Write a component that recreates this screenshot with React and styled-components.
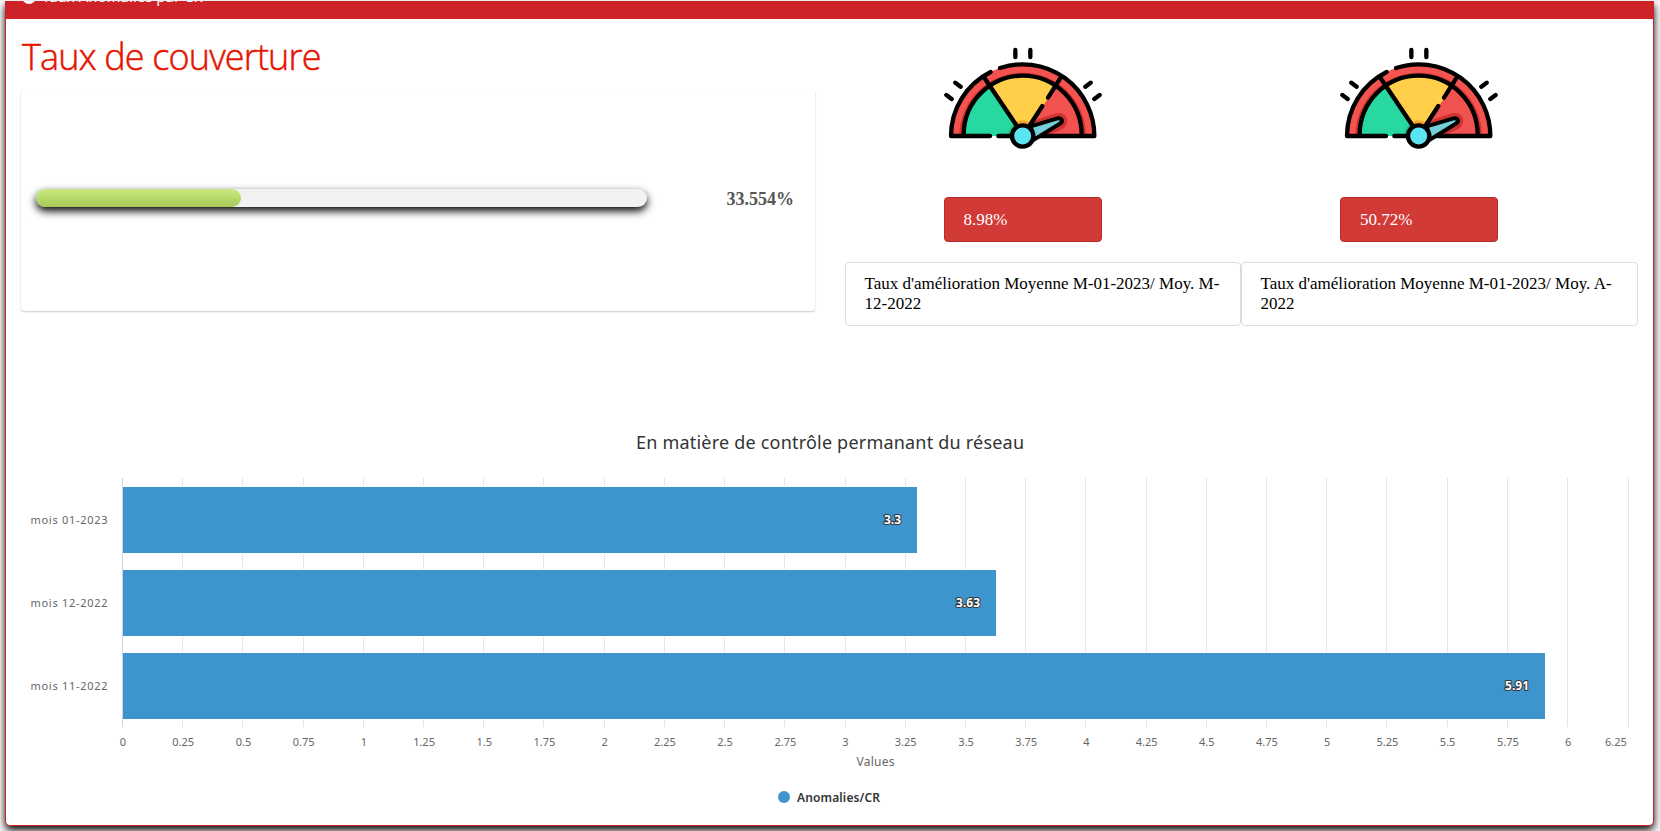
import React from "react";
import styled, { createGlobalStyle } from "styled-components";

const Global = createGlobalStyle`
  *{box-sizing:border-box}
  html,body,#root{margin:0;height:831px;overflow:hidden;background:#fff}
`;
const CHART_FONT = '"Noto Sans","Open Sans",sans-serif';

const Page = styled.div`
  height: 831px;
  overflow: hidden;
  border-top: 1px solid #ececec;
  padding: 0 6px 5px 5px;
  display: flex;
  font-family: "Liberation Serif", serif;
`;
const Panel = styled.section`
  flex: 1;
  height: 825px;
  display: flex;
  flex-direction: column;
  background: #fff;
  border: 1px solid #ce2229;
  border-top: 0;
  border-radius: 0 0 5px 5px;
  box-shadow: 0 4px 8px #000;
`;
const PanelHeader = styled.header`
  height: 18px;
  flex: none;
  overflow: hidden;
  display: flex;
  align-items: flex-start;
  gap: 6px;
  padding-left: 16px;
  background: #ce2229;
  color: #fff;
`;
const HeaderDot = styled.svg`
  width: 14px;
  height: 14px;
  flex: none;
  margin-top: -11px;
`;
const HeaderTitle = styled.span`
  margin-top: -16px;
  font: 15px/22px "Noto Sans", sans-serif;
  white-space: nowrap;
`;
const Top = styled.div`
  display: flex;
  height: 390px;
  flex: none;
  padding: 0 15px;
  gap: 30px;
`;
const Coverage = styled.div`
  width: 794px;
`;
const Title = styled.h1`
  margin: 14px 0 0 1px;
  height: 56px;
  font: 300 36px/48px "Open Sans", sans-serif;
  letter-spacing: -0.85px;
  -webkit-text-stroke: 0.5px #e61400;
  color: #e61400;
  white-space: nowrap;
`;
const ProgressCard = styled.div`
  height: 222px;
  border-radius: 3px;
  box-shadow: 0 1px 2px rgba(0, 0, 0, 0.2), 0 0 1px rgba(0, 0, 0, 0.1);
  padding: 100px 21px 0 15px;
  display: flex;
  align-items: flex-start;
  justify-content: space-between;
`;
const Track = styled.div`
  width: 611px;
  height: 18px;
  border-radius: 9px;
  background: #f2f2f2;
  box-shadow: 0 4px 8px #000;
`;
const Fill = styled.div`
  height: 100%;
  border-radius: 9px;
  background: linear-gradient(#cbea82, #a5c956);
`;
const Percent = styled.strong`
  font-size: 18px;
  line-height: 21px;
  color: #555;
`;
const Indicators = styled.div`
  display: flex;
  width: 793px;
`;
const Indicator = styled.article`
  width: 396px;
  display: flex;
  flex-direction: column;
  align-items: center;
  padding-top: 9px;

  &:last-child {
    width: 397px;
  }
`;
const Gauge = styled.svg`
  width: 158px;
  height: 158px;
  flex: none;
  margin-left: -41px;
`;
const Rate = styled.div`
  width: 158px;
  height: 45px;
  margin: 11px 0 20px -41px;
  padding: 0 19px;
  border: 1px solid #b52b2b;
  border-radius: 4px;
  background: #d23a37;
  color: #fff;
  font-size: 17px;
  line-height: 43px;
`;
const Caption = styled.div`
  width: 100%;
  height: 64px;
  padding: 11px 18.5px;
  border: 1px solid #ddd;
  border-radius: 4px;
  color: #000;
  font-size: 17px;
  line-height: 20px;
`;
const Chart = styled.svg`
  width: 1647px;
  height: 416px;
  flex: none;
  display: block;
  font-family: ${CHART_FONT};
`;
const AxisText = styled.text`
  font-size: ${(p) => p.$size || 11}px;
  fill: #666;
`;
const ChartTitle = styled.text`
  font-size: 18px;
  fill: #333;
`;
const ValueText = styled.text`
  font-size: 12px;
  font-weight: 700;
  fill: #fff;
  stroke: #333;
  stroke-width: 2px;
  stroke-linejoin: round;
  paint-order: stroke;
`;
const LegendText = styled.text`
  font-size: 12px;
  font-weight: 600;
  fill: #333;
`;

function GaugeIcon() {
  return (
    <Gauge viewBox="0 0 158 158" aria-hidden="true">
      <g transform="translate(-14 7) scale(0.33333)" strokeLinecap="round" strokeLinejoin="round">
        <path d="M63 303a215 215 0 0 1 430 0z" fill="#f55350" />
        <path d="M88 303a190 190 0 0 1 380 0z" fill="#d13330" />
        <path d="M101 303a177 178 0 0 1 354 0z" fill="#f2524f" />
        <path d="M101 303C101 243 131 189 178 157L278 303z" fill="#27d9a1" />
        <path d="M178 157C236 114 318 114 377 157L278 303z" fill="#ffcf4a" />
        <path d="M258 262c10-7 30-7 40 0l-20 30z" fill="#f5a52c" />
        <path d="M236 303c-2-14 3-24 14-34l20 34z" fill="#1fb98a" />
        <path d="M296 262L374 236c26-8 44 10 36 30-3 9-10 15-20 20l-50 21z" fill="#d13330" />
        <g fill="none" stroke="#000" strokeWidth="13">
          <path d="M180 303H63A215 215 0 0 1 182 111" />
          <path d="M210 99A215 215 0 0 1 493 303H318" />
          <path d="M205 303h42" />
          <path d="M101 300A177 178 0 0 1 455 300" />
          <path d="M163 128L260 272" />
          <path d="M392 128L354 188M337 213L300 270" />
          <path d="M256 45v21M301 45v21" />
          <path d="M76 143l16 12M49 180l16 12M482 143l-16 12M509 180l-16 12" />
        </g>
        <path d="M302 274L380 251c16-4 22 8 8 16L312 314z" fill="#75cfdb" stroke="#000" strokeWidth="12" />
        <circle cx="278" cy="303" r="32" fill="#5be4f1" stroke="#000" strokeWidth="13" />
      </g>
    </Gauge>
  );
}

const bars = [
  { label: "mois 01-2023", value: 3.3 },
  { label: "mois 12-2022", value: 3.63 },
  { label: "mois 11-2022", value: 5.91 },
];
const ticks = Array.from({ length: 26 }, (_, i) => i * 0.25);
const X0 = 117;
const UNIT = 240.84;
const PLOT_RIGHT = 1622.5;
const barWidth = (value) => Math.round(value * UNIT - 1);
const gridX = (t) => (t === 6.25 ? PLOT_RIGHT : Math.round(X0 + t * UNIT) - 0.5);

function BarChart() {
  return (
    <Chart viewBox="0 0 1647 416">
      <ChartTitle x="824" y="40" textAnchor="middle" textLength="388">En matière de contrôle permanant du réseau</ChartTitle>
      {ticks.map((t) => (
        <path key={t} d={`M${gridX(t)} 69v249`} stroke={t === 0 ? "#ccd6eb" : "#e6e6e6"} />
      ))}
      {bars.map((b, i) => (
        <g key={b.label}>
          <rect x={X0} y={77 + i * 83} width={barWidth(b.value) + 1} height="68" fill="#fff" />
          <rect x={X0} y={78 + i * 83} width={barWidth(b.value)} height="66" fill="#3e94cd" />
          <AxisText x="101.5" y={115 + i * 83} textAnchor="end" textLength="77">{b.label}</AxisText>
          <ValueText x={X0 + barWidth(b.value) - 16} y={115 + i * 83} textAnchor="end">{b.value}</ValueText>
        </g>
      ))}
      {ticks.map((t) => (
        <AxisText key={t} x={t === 6.25 ? 1610 : X0 + t * UNIT} y="337" textAnchor="middle">{t}</AxisText>
      ))}
      <AxisText $size={12} x="869.5" y="357" textAnchor="middle" textLength="38">Values</AxisText>
      <circle cx="778" cy="388" r="6" fill="#3e94cd" />
      <LegendText x="791" y="393" textLength="83">Anomalies/CR</LegendText>
    </Chart>
  );
}

export default function App() {
  return (
    <Page>
      <Global />
      <Panel>
        <PanelHeader>
          <HeaderDot viewBox="0 0 14 14"><circle cx="7" cy="7" r="7" fill="#fff" /></HeaderDot>
          <HeaderTitle>Taux Anomalies par CR</HeaderTitle>
        </PanelHeader>
        <Top>
          <Coverage>
            <Title>Taux de couverture</Title>
            <ProgressCard>
              <Track><Fill style={{ width: "33.554%" }} /></Track>
              <Percent>33.554%</Percent>
            </ProgressCard>
          </Coverage>
          <Indicators>
            <Indicator><GaugeIcon /><Rate>8.98%</Rate><Caption>Taux d'amélioration Moyenne M-01-2023/ Moy. M-12-2022</Caption></Indicator>
            <Indicator><GaugeIcon /><Rate>50.72%</Rate><Caption>Taux d'amélioration Moyenne M-01-2023/ Moy. A-2022</Caption></Indicator>
          </Indicators>
        </Top>
        <BarChart />
      </Panel>
    </Page>
  );
}
